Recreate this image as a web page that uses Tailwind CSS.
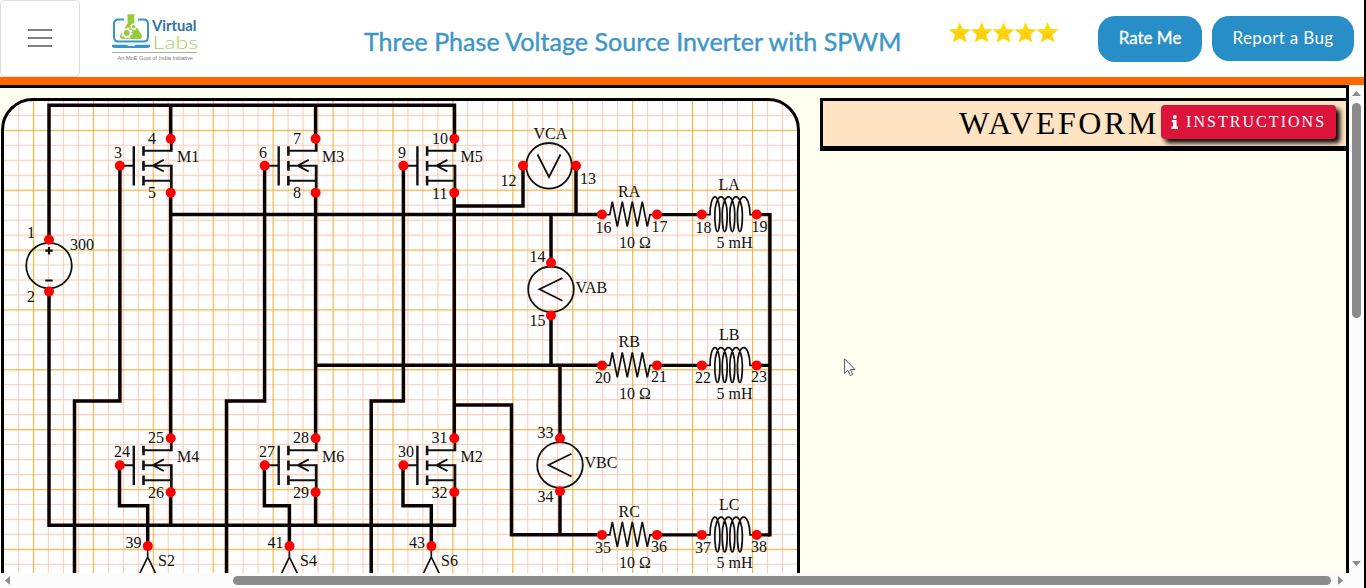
<!DOCTYPE html>
<html lang="en">
<head>
<meta charset="utf-8">
<title>Three Phase Voltage Source Inverter with SPWM</title>
<script src="https://cdn.jsdelivr.net/npm/@tailwindcss/browser@4"></script>
</head>
<body class="relative flex h-[588px] w-[1366px] flex-col overflow-hidden border-r-2 border-black bg-white">
<header class="flex h-[77px] shrink-0 items-start bg-white font-['Lato',sans-serif]">
  <button class="flex h-[77px] w-20 shrink-0 flex-col items-center justify-center gap-[6px] rounded-[5px] border border-[#dedede] pb-[2px]" aria-label="Menu">
    <span class="h-[2px] w-6 bg-[#808080]"></span><span class="h-[2px] w-6 bg-[#808080]"></span><span class="h-[2px] w-6 bg-[#808080]"></span>
  </button>
  <svg class="ml-7 mt-[10px] shrink-0" width="94" height="54" viewBox="108 10 94 54">
    <path d="M124 19.500H118.500Q114 19.500 114 24V37Q114 41.500 118.500 41.500H143.500Q148 41.500 148 37V24Q148 19.500 143.500 19.500H138" fill="none" stroke="#3b93cb" stroke-width="2"/>
    <path d="M112 44.700H150V46.500Q149 48 147 48H115Q113 48 112 46.500Z" fill="#3b93cb"/><path d="M127 44.700H136L134.500 46H128.500Z" fill="#fff"/>
    <path d="M127.500 14.300H134.300V23.500L141.500 34.500Q143 38.500 139.500 39H123Q119 38.500 120.500 34.500L127.500 23.500Z" fill="#97ca3d"/>
    <circle cx="126.700" cy="33" r="3.800" fill="none" stroke="#fff" stroke-width="1.700"/><circle cx="126.700" cy="33" r="5" fill="none" stroke="#fff" stroke-width="1.500" stroke-dasharray="1.900 2.027"/>
    <circle cx="133.700" cy="26.700" r="2.300" fill="none" stroke="#fff" stroke-width="1.200"/><circle cx="133.700" cy="26.700" r="3.200" fill="none" stroke="#fff" stroke-width="1" stroke-dasharray="1.200 1.313"/>
    <text x="152" y="31.200" font-family="Lato" font-weight="700" font-size="15.500" fill="#2d72a8" textLength="44.500" lengthAdjust="spacingAndGlyphs">Virtual</text>
    <text x="152.500" y="48.500" font-family="Lato" font-weight="300" font-size="17.500" fill="#a5cf5b" textLength="45.500" lengthAdjust="spacingAndGlyphs">Labs</text>
    <path d="M112 52.500H197" stroke="#aaa" stroke-width="1"/>
    <text x="117.500" y="59.800" font-family="Liberation Sans" font-size="5.600" fill="#777" textLength="75.500" lengthAdjust="spacingAndGlyphs">An MoE Govt of India Initiative</text>
  </svg>
  <h1 class="ml-[162px] mt-6 w-[540px] shrink-0 whitespace-nowrap text-[25px] leading-[34px] tracking-[0.04px] text-[#3c96c8] [-webkit-text-stroke:0.4px_#3c96c8]">Three Phase Voltage Source Inverter with SPWM</h1>
  <svg class="ml-[44px] mt-[21px] shrink-0" width="112" height="24" viewBox="948 21 112 24">
    <defs>
      <linearGradient id="gold" x1="0" y1="0" x2="0" y2="1"><stop offset="0" stop-color="#ffde00"/><stop offset=".5" stop-color="#fcd50c"/><stop offset=".56" stop-color="#ffcb10"/><stop offset="1" stop-color="#ffd900"/></linearGradient>
      <path id="star" d="M0 -11 2.900 -4 11 -3.500 4.700 1.700 7 9.600 0 5.600 -7 9.600 -4.700 1.700 -11 -3.500 -2.900 -4Z" fill="url(#gold)"/>
    </defs>
    <use href="#star" x="959.700" y="33"/><use href="#star" x="981.600" y="33"/><use href="#star" x="1003.500" y="33"/><use href="#star" x="1025.500" y="33"/><use href="#star" x="1047.500" y="33"/>
  </svg>
  <button class="ml-[38px] mt-4 h-[46px] w-[104px] shrink-0 whitespace-nowrap rounded-[17px] bg-[#288ec8] text-[17px] text-white [-webkit-text-stroke:0.3px_#fff]"><span class="relative -top-px">Rate Me</span></button>
  <button class="ml-[10px] mt-4 h-[45px] w-[142px] shrink-0 whitespace-nowrap rounded-[17px] bg-[#288ec8] text-[17px] tracking-[0.35px] text-white"><span class="relative -top-px">Report a Bug</span></button>
</header>
<div class="h-2 shrink-0 bg-[#ff6600]"></div>
<div class="flex h-[488px] shrink-0">
  <main class="flex w-[1349px] items-start overflow-hidden border-r-[3px] border-t-[3px] border-black bg-[#fffff0] pt-[10px]">
    <section class="ml-px h-[600px] w-[799px] shrink-0 overflow-hidden rounded-[32px] border-[3px] border-black bg-white">
      <svg width="793" height="594" viewBox="4 101 793 594" font-family="Liberation Serif" font-size="16" fill="#111">
        <defs>
          <pattern id="grid" x="32.900" y="129.800" width="59.920" height="59.850" patternUnits="userSpaceOnUse">
            <path d="M15.500 0V60M30.500 0V60M45.500 0V60M0 15.500H60M0 30.500H60M0 45.500H60" stroke="#f6ceba" stroke-width="1.100"/>
            <path d="M.6 0V60M0 .6H60" stroke="#ecb544" stroke-width="1.200"/>
          </pattern>
          <g id="mosfet" fill="none" stroke="#111">
            <path d="M0 0H14M23 -15H51M23 0H51M23 15H51M44 -5.800 33 0 44 5.800" stroke-width="1.900"/>
            <path d="M14 -19.500V19.800" stroke-width="2.400"/>
            <path d="M23.700 -19.500V-10M23.700 -4.700V5M23.700 10.300V19.800" stroke-width="2.600"/>
            <path d="M51.500 -27V-14M51.500 -1V27" stroke-width="2.800"/>
          </g>
          <g id="load" fill="none" stroke="#111" stroke-width="1.700">
            <path d="M0 0H7.800L10.300 -13 15.300 12 20.300 -13 25.300 12 30.300 -13 35.300 12 40.300 -13 45.300 12 48 0H55"/>
            <path d="M100 0H108A4.950 17.700 0 0 1 117.900 0A2.550 17 0 0 1 112.800 0A6.200 17.700 0 0 1 125.200 0A2.500 17 0 0 1 120.200 0A6.300 17.700 0 0 1 132.800 0A2.500 17 0 0 1 127.800 0A6.300 17.700 0 0 1 140.400 0A2.500 17 0 0 1 135.400 0A6.300 17.700 0 0 1 148 0H155"/>
            <path d="M55 0H100M155 0H168" stroke-width="3.400" stroke="#0d0202"/>
          </g>
        </defs>
        <rect x="4" y="101" width="793" height="594" fill="url(#grid)"/>
        <g fill="none" stroke="#0d0202" stroke-width="3.500">
          <path d="M49 240V105.200H454.500V139M170.700 105V139M315.600 105V139M49 291V525.300H454.500V492M170.700 492V525M315.600 492V525"/>
          <path d="M170.700 192V438M170.700 214.500H602M315.600 192V438M315.600 365.200H602M454.300 192V438"/>
          <path d="M454 206H523V166M576 166V214.500M551 263V213M551 315V367"/>
          <path d="M119.900 166V401H74.500V600M264.600 166V401H226.500V600M403.400 166V401H371.200V600"/>
          <path d="M119.500 465V505.800H147.700V546M264.400 465V505.800H289.400V546M403 465V505.800H431.300V546"/>
          <path d="M454 405H511.500V534.800H602M560 365V438M560 491V535M769.900 213V536.500"/>
        </g>
        <use href="#mosfet" x="119.800" y="165.700"/><use href="#mosfet" x="264.700" y="165.700"/><use href="#mosfet" x="403.400" y="165.700"/>
        <use href="#mosfet" x="119.800" y="465.200"/><use href="#mosfet" x="264.700" y="465.200"/><use href="#mosfet" x="403.400" y="465.200"/>
        <use href="#load" x="602" y="214.600"/><use href="#load" x="602" y="365.400"/><use href="#load" x="602" y="534.900"/>
        <g fill="none" stroke="#111" stroke-width="1.800">
          <circle cx="49" cy="265.600" r="22.800"/><circle cx="549" cy="165.800" r="22.800"/><circle cx="551" cy="289.300" r="22.800"/><circle cx="560" cy="465" r="22.800"/>
          <path d="M537.500 154.500 549 177 560.500 154.500M562.500 278 539.500 289.300 562.500 300.700M571.500 453.700 548.500 465 571.500 476.500"/>
          <path d="M45.300 250.700H52.700M49 247V254.400M45.300 280.500H52.700" stroke-width="2.200"/>
          <path d="M147.700 546V557L139 575M147.700 557L156.400 575M289.400 546V557L280.700 575M289.400 557L298.100 575M431.300 546V557L422.600 575M431.300 557L440 575" stroke-width="1.700"/>
        </g>
        <g fill="#ff0000">
          <circle cx="49" cy="239.700" r="5"/><circle cx="49" cy="291.500" r="5"/>
          <circle cx="119.800" cy="165.700" r="5"/><circle cx="264.700" cy="165.700" r="5"/><circle cx="403.400" cy="165.700" r="5"/>
          <circle cx="170.700" cy="138.800" r="5"/><circle cx="315.600" cy="138.800" r="5"/><circle cx="454.300" cy="138.800" r="5"/>
          <circle cx="170.700" cy="192.700" r="5"/><circle cx="315.600" cy="192.700" r="5"/><circle cx="454.300" cy="192.700" r="5"/>
          <circle cx="119.800" cy="465.200" r="5"/><circle cx="264.700" cy="465.200" r="5"/><circle cx="403.400" cy="465.200" r="5"/>
          <circle cx="170.700" cy="438.300" r="5"/><circle cx="315.600" cy="438.300" r="5"/><circle cx="454.300" cy="438.300" r="5"/>
          <circle cx="170.700" cy="492.200" r="5"/><circle cx="315.600" cy="492.200" r="5"/><circle cx="454.300" cy="492.200" r="5"/>
          <circle cx="147.800" cy="546.100" r="5"/><circle cx="289.500" cy="546.100" r="5"/><circle cx="431.400" cy="546.100" r="5"/>
          <circle cx="523" cy="165.700" r="5"/><circle cx="576" cy="165.700" r="5"/><circle cx="551" cy="262.700" r="5"/><circle cx="551" cy="315.400" r="5"/><circle cx="560" cy="438.300" r="5"/><circle cx="560" cy="491.200" r="5"/>
          <circle cx="602" cy="214.500" r="5"/><circle cx="657" cy="214.500" r="5"/><circle cx="701.800" cy="214.500" r="5"/><circle cx="756.700" cy="214.500" r="5"/>
          <circle cx="602" cy="365.400" r="5"/><circle cx="657" cy="365.400" r="5"/><circle cx="701.800" cy="365.400" r="5"/><circle cx="756.700" cy="365.400" r="5"/>
          <circle cx="602" cy="534.900" r="5"/><circle cx="657" cy="534.900" r="5"/><circle cx="701.800" cy="534.900" r="5"/><circle cx="756.700" cy="534.900" r="5"/>
        </g>
        <text x="27" y="238.400">1</text><text x="27" y="302.400">2</text><text x="70" y="249.500">300</text>
        <text x="114" y="158">3</text><text x="148" y="143.500">4</text><text x="148" y="198">5</text><text x="177" y="162.400">M1</text>
        <text x="259" y="158">6</text><text x="293" y="143.500">7</text><text x="293" y="198">8</text><text x="322" y="162.400">M3</text>
        <text x="398" y="158">9</text><text x="432" y="143.500">10</text><text x="432" y="198.500">11</text><text x="460.500" y="162.400">M5</text>
        <text x="533.500" y="139">VCA</text><text x="500.500" y="186">12</text><text x="580" y="184">13</text>
        <text x="529.500" y="262.400">14</text><text x="529.500" y="326.400">15</text><text x="575.500" y="293">VAB</text>
        <text x="537.500" y="438.400">33</text><text x="537.500" y="502">34</text><text x="584.500" y="468.400">VBC</text>
        <text x="114" y="457">24</text><text x="148" y="443">25</text><text x="148" y="497.500">26</text><text x="177" y="462">M4</text>
        <text x="259" y="457">27</text><text x="293" y="443">28</text><text x="293" y="497.500">29</text><text x="322" y="462">M6</text>
        <text x="398" y="457">30</text><text x="431.500" y="443">31</text><text x="431.500" y="497.500">32</text><text x="460.500" y="462">M2</text>
        <text x="125.500" y="548">39</text><text x="158" y="566.400">S2</text><text x="267.500" y="548">41</text><text x="300" y="566.400">S4</text><text x="409" y="548">43</text><text x="441" y="566.400">S6</text>
        <text x="618" y="196.500">RA</text><text x="718.500" y="190">LA</text><text x="619" y="248">10 Ω</text><text x="716.500" y="248">5 mH</text>
        <text x="595.500" y="232.500">16</text><text x="651.500" y="231.500">17</text><text x="695.500" y="232.500">18</text><text x="751.500" y="231.500">19</text>
        <text x="618.500" y="347.400">RB</text><text x="719" y="340.400">LB</text><text x="619" y="398.500">10 Ω</text><text x="716.500" y="398.500">5 mH</text>
        <text x="595" y="383.400">20</text><text x="651" y="382.400">21</text><text x="695" y="383.400">22</text><text x="751" y="382.400">23</text>
        <text x="618.500" y="517">RC</text><text x="719" y="510.400">LC</text><text x="619" y="568">10 Ω</text><text x="716.500" y="568">5 mH</text>
        <text x="595" y="553">35</text><text x="651" y="552">36</text><text x="695" y="553">37</text><text x="751" y="552">38</text>
      </svg>
    </section>
    <section class="ml-5 flex h-[53px] w-[526px] shrink-0 items-start border-b-[5px] border-l-[3px] border-t-[3px] border-black bg-[#ffe4c4] font-['Liberation_Serif',serif]">
      <h2 class="ml-[136px] mt-1 w-[202px] shrink-0 whitespace-nowrap text-[32px] leading-[36px] tracking-[2.65px] text-black">WAVEFORM</h2>
      <button class="mt-1 flex h-[34px] w-[175px] shrink-0 items-center rounded-[4px] bg-[#dc143c] pl-[10px] text-[16px] tracking-[2.05px] text-white shadow-[4px_4px_5px_#000]">
        <svg class="mr-[7px]" width="8" height="14" viewBox="0 0 8 14" fill="#fff"><circle cx="3.800" cy="2" r="2"/><path d="M.8 5H5.600V11.500H7V14H.5V11.500H2V7.300H.8Z"/></svg><span>INSTRUCTIONS</span>
      </button>
    </section>
  </main>
  <div class="flex w-[15px] flex-col items-center bg-[#fcfcfc] pt-[6px]">
    <svg class="shrink-0" width="9" height="5" viewBox="0 0 9 5"><path d="M0 5 4.500 0 9 5Z" fill="#8b8b8b"/></svg>
    <div class="mt-[7px] h-[215px] w-[9px] shrink-0 rounded-full bg-[#8b8b8b]"></div>
    <svg class="mt-[243px] shrink-0" width="9" height="5" viewBox="0 0 9 5"><path d="M0 0H9L4.500 5Z" fill="#8b8b8b"/></svg>
  </div>
</div>
<div class="flex h-[15px] shrink-0 items-center bg-[#fcfcfc] pl-[5px]">
  <svg class="shrink-0" width="5" height="9" viewBox="0 0 5 9"><path d="M5 0V9L0 4.500Z" fill="#8b8b8b"/></svg>
  <div class="ml-[223px] h-[9px] w-[1098px] shrink-0 rounded-full bg-[#8b8b8b]"></div>
  <svg class="ml-[7px] shrink-0" width="5" height="9" viewBox="0 0 5 9"><path d="M0 0V9L5 4.500Z" fill="#8b8b8b"/></svg>
</div>
<svg class="absolute left-[844px] top-[358px]" width="12" height="19" viewBox="0 0 12 19"><path d="M.6 .8V15.500L4 12.400 6.300 17.600 8.700 16.500 6.400 11.500H11Z" fill="#fff" stroke="#555" stroke-width="1"/></svg>
</body>
</html>
